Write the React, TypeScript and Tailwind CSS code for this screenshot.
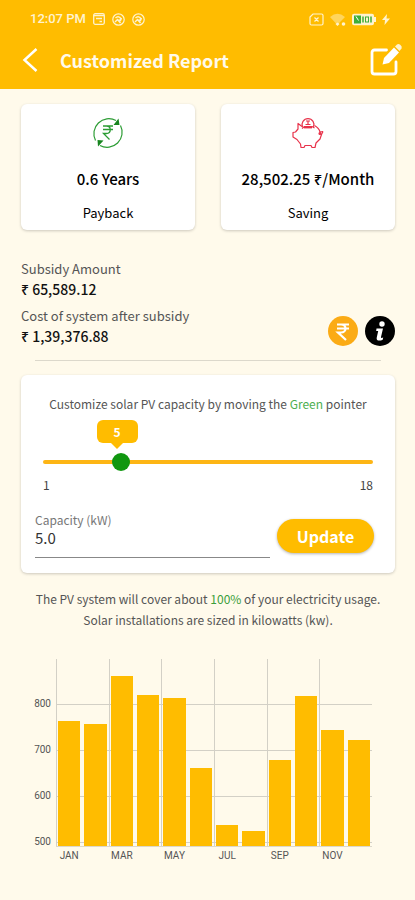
import { useState } from "react";

type MonthOutput = {
  month: string;
  label: boolean;
  kwh: number;
};

const output: MonthOutput[] = [
  { month: "JAN", label: true, kwh: 765 },
  { month: "FEB", label: false, kwh: 759 },
  { month: "MAR", label: true, kwh: 865 },
  { month: "APR", label: false, kwh: 822 },
  { month: "MAY", label: true, kwh: 816 },
  { month: "JUN", label: false, kwh: 663 },
  { month: "JUL", label: true, kwh: 539 },
  { month: "AUG", label: false, kwh: 526 },
  { month: "SEP", label: true, kwh: 681 },
  { month: "OCT", label: false, kwh: 820 },
  { month: "NOV", label: true, kwh: 747 },
  { month: "DEC", label: false, kwh: 725 },
];

const ticks = [800, 700, 600, 500];
const AXIS_MIN = 493;
const AXIS_MAX = 901;

const MIN_KW = 1;
const MAX_KW = 18;

export default function App() {
  const [capacity, setCapacity] = useState(5);
  const [text, setText] = useState("5.0");

  const percent = ((capacity - MIN_KW) / (MAX_KW - MIN_KW)) * 100;

  return (
    <div className="min-h-screen bg-[#fffaeb] pb-9 font-['Noto_Sans_CJK_SC','Noto_Sans',sans-serif] text-[#222]">
      <header className="bg-[#ffbc00] pb-[7px] text-white">
        <StatusBar />
        <div className="flex h-11 items-center pr-3 pl-[22px]">
          <button aria-label="Back" className="mr-[22px]">
            <svg width="16" height="26" viewBox="0 0 16 26" fill="none" stroke="currentColor" strokeWidth="2.5">
              <path d="M14.5 2 2.5 13l12 11" />
            </svg>
          </button>
          <h1 className="flex-1 text-[18px] leading-6 font-bold text-[#fffaeb]">Customized Report</h1>
          <button aria-label="Edit report">
            <EditIcon />
          </button>
        </div>
      </header>

      <main className="pt-[15px] pr-5 pl-[21px]">
        {/* SUMMARY */}
        <div className="grid grid-cols-2 gap-[26px]">
          <SummaryCard icon={<PaybackIcon />} value="0.6 Years" label="Payback" />
          <SummaryCard icon={<PiggyIcon />} value="28,502.25 ₹/Month" label="Saving" />
        </div>

        {/* COST */}
        <section className="mt-[29px] flex items-end justify-between">
          <dl className="text-[13px] leading-5">
            <dt className="text-[#555]">Subsidy Amount</dt>
            <dd className="text-[14px] font-medium text-[#111]">₹ 65,589.12</dd>
            <dt className="mt-[7px] text-[#555]">Cost of system after subsidy</dt>
            <dd className="text-[14px] font-medium text-[#111]">₹ 1,39,376.88</dd>
          </dl>
          <div className="flex gap-[7px]">
            <button aria-label="Price details" className="h-[30px] w-[30px] rounded-full bg-[#fbab15]">
              <svg width="30" height="30" viewBox="0 0 30 30" fill="none" stroke="white" strokeWidth="2.200">
                <path d="M9 8.500h12M9 12.500h12M9 8.500h4c6 0 6 8 0 8H10l8 7.500" />
              </svg>
            </button>
            <button aria-label="Information" className="h-[30px] w-[30px] rounded-full bg-black">
              <svg width="30" height="30" viewBox="0 0 30 30" fill="white">
                <circle cx="17" cy="8" r="2.700" />
                <path d="M11.500 12.500h6.500l-2 8.500c-.2 1 .5 1.200 2.200.5l-.5 2.200c-3 1.500-6.700 1.300-6-2l1.500-6.700h-2z" />
              </svg>
            </button>
          </div>
        </section>
        <hr className="mx-[14px] mt-[14px] border-[#dcd8cb]" />

        {/* CAPACITY */}
        <section className="mt-[14px] rounded-md bg-white px-[14px] pt-[19px] pb-[15px] shadow-[0_1px_3px_rgba(0,0,0,0.2)]">
          <p className="text-center text-[12px] leading-5 text-[#555]">
            Customize solar PV capacity by moving the <span className="text-[#4caf50]">Green</span> pointer
          </p>

          <div className="relative mx-2 mt-[39px] h-[18px]">
            <div className="absolute inset-x-0 top-[7px] h-1 rounded-full bg-[#fdb515]" />
            <input
              type="range"
              aria-label="Solar PV capacity"
              min={MIN_KW}
              max={MAX_KW}
              value={capacity}
              onChange={(e) => {
                setCapacity(Number(e.target.value));
                setText(Number(e.target.value).toFixed(1));
              }}
              className="absolute -left-[9px] h-[18px] w-[calc(100%+18px)] appearance-none bg-transparent [&::-webkit-slider-thumb]:h-[18px] [&::-webkit-slider-thumb]:w-[18px] [&::-webkit-slider-thumb]:appearance-none [&::-webkit-slider-thumb]:rounded-full [&::-webkit-slider-thumb]:bg-[#109710]"
            />
            <div
              className="absolute -top-[33px] -ml-6 flex w-[41px] flex-col items-center"
              style={{ left: `${percent}%` }}
            >
              <output className="w-full rounded-md bg-[#ffbc00] text-center text-[12px] leading-[23px] font-bold text-white">
                {capacity}
              </output>
              <svg width="12" height="6" viewBox="0 0 12 6" fill="#ffbc00">
                <path d="M0 0h12L6 6z" />
              </svg>
            </div>
          </div>

          <div className="mx-2 mt-1 flex justify-between text-[12px] leading-5 text-[#444]">
            <span>{MIN_KW}</span>
            <span>{MAX_KW}</span>
          </div>

          <div className="mt-[17px] flex items-start gap-[7px] pr-[7px]">
            <div className="min-w-0 flex-1 border-b border-[#888] pb-[9px]">
              <label htmlFor="capacity" className="block text-[12px] leading-4 text-[#777]">
                Capacity (kW)
              </label>
              <input
                id="capacity"
                type="text"
                value={text}
                onChange={(e) => setText(e.target.value)}
                className="block h-5 w-full text-[15px] leading-5 text-[#333] outline-none"
              />
            </div>
            <button className="mt-[7px] h-[34px] w-[97px] rounded-full bg-[#ffbc00] text-[16px] font-bold text-white shadow-[0_1px_3px_rgba(0,0,0,0.3)]">
              Update
            </button>
          </div>
        </section>

        <p className="-mx-3 mt-[15px] text-center text-[12px] leading-[21px] text-[#555]">
          The PV system will cover about <span className="text-[#3a9e3a]">100%</span> of your electricity usage.
          <br />
          Solar installations are sized in kilowatts (kw).
        </p>

        <OutputChart />
      </main>
    </div>
  );
}

/* ---------------- COMPONENTS ---------------- */

function StatusBar() {
  return (
    <div className="flex h-[38px] items-center justify-between pr-[25px] pl-[30px] text-[#fff3cf]">
      <div className="flex items-center gap-[7px] font-['Roboto',sans-serif]">
        <span className="text-[13px] leading-5 font-medium">12:07 PM</span>
        <svg width="12" height="12" viewBox="0 0 12 12" fill="none" stroke="currentColor" strokeWidth="1.300">
          <rect x="0.700" y="0.700" width="10.600" height="10.600" rx="1.500" />
          <path d="M1 2.500h10M3 5.500h6M6.500 8.500h2.500" strokeWidth="1.500" />
        </svg>
        <SyncBadge />
        <SyncBadge />
      </div>
      <div className="flex items-center gap-[5px]">
        <svg width="15" height="13" viewBox="0 0 15 13" fill="none" stroke="currentColor" strokeWidth="1.200">
          <path d="M4 1h8.500Q14 1 14 2.500v8Q14 12 12.500 12h-10Q1 12 1 10.500V4zM5.500 4.500l4 4M9.500 4.500l-4 4" />
        </svg>
        <svg width="17" height="13" viewBox="0 0 17 13" fill="currentColor">
          <path d="M1 4Q8.500-2.500 16 4l-5 5-1.500 2H7.500z" opacity="0.450" />
          <path d="M8.500 9.500 6.500 11l2 2 2-2z" />
          <circle cx="14.500" cy="11" r="1.800" />
        </svg>
        <svg width="26" height="13" viewBox="0 0 26 13">
          <path d="M3 0.700h18q2 0 2 2v1.300h2v5h-2v1.300q0 2-2 2H3q-2 0-2-2v-7.600q0-2 2-2z" fill="#fff3cf" />
          <path d="M3 2.500h7v8H3z" fill="#3fae3a" />
          <path d="M12 3.500v6M20 3.500v6" stroke="#3fae3a" strokeWidth="1.500" />
          <rect x="14.500" y="4" width="3" height="5" fill="none" stroke="#3fae3a" />
          <path d="M5 3.500l2.500 4" stroke="#fff" />
        </svg>
        <svg width="8" height="11" viewBox="0 0 8 11" fill="currentColor">
          <path d="M5 0 0 6h3L2.500 11 8 4.500H4.500z" />
        </svg>
      </div>
    </div>
  );
}

function SyncBadge() {
  return (
    <svg width="13" height="13" viewBox="0 0 13 13" fill="none" stroke="currentColor" strokeWidth="1.200">
      <circle cx="6.500" cy="6.500" r="5.700" />
      <path d="M3.500 5Q6 2.500 8.500 5v2.500M6 7l2.500.5L9.500 5M3 9l2.500-2.500L8.500 10" strokeWidth="1.400" />
    </svg>
  );
}

function SummaryCard({ icon, value, label }: { icon: React.ReactNode; value: string; label: string }) {
  return (
    <div className="flex flex-col items-center rounded-md bg-white pt-3 pb-[7px] text-black shadow-[0_1px_3px_rgba(0,0,0,0.2)]">
      {icon}
      <div className="mt-[19px] text-[15px] leading-5 font-medium whitespace-nowrap">{value}</div>
      <div className="mt-[14px] text-[13px] leading-5">{label}</div>
    </div>
  );
}

function EditIcon() {
  return (
    <svg width="34" height="34" viewBox="0 0 34 34" fill="none">
      <path
        d="M17.500 7H5.500Q3 7 3 9.500v19Q3 31 5.500 31h19q2.500 0 2.500-2.500V19"
        stroke="white"
        strokeWidth="2.800"
        strokeLinecap="round"
      />
      <path d="M13.500 21.500l1.500-6.500L25 4.500l5 5L20 20z" fill="white" />
      <path d="M26 3.500 28 1.500q1.500-1 3.500.5t1 3.500L30.500 8z" fill="#fff3cf" />
    </svg>
  );
}

function PaybackIcon() {
  return (
    <svg width="34" height="34" viewBox="0 0 34 34" fill="none" stroke="#2c9c34">
      <path d="M4.500 24.500A15 15 0 0 1 25 4.500M29.500 9.500A15 15 0 0 1 9 29.500" strokeWidth="1.200" />
      <path d="M27.500 2.500l1 6.500h-6zM6.500 24l6 .5-5.500 6z" fill="#17851f" stroke="none" />
      <path d="M12 10h10M12 13.500h10M12 10h3.500c5 0 5 7.500 0 7.500h-3l6 6" strokeWidth="1.300" />
    </svg>
  );
}

function PiggyIcon() {
  return (
    <svg width="34" height="34" viewBox="0 0 34 34" fill="none" stroke="#e8324a" strokeWidth="1.200" strokeLinejoin="round">
      <path d="M11 10.500 7 7.500v5.500L4.500 16 2 16.500v4.500l4 2.500 3.500 4.500 .5 3.500h3l1-2h6l1 2h3l1-4.500 4-4 1.500-4.500 1.500-3" />
      <path d="M32 15.500l-3 .5q-1-4-5.500-6.500M11 12.500l2.500-2h7.500l2.500 1.500" />
      <path d="M11.500 11A6 6 0 1 1 22.500 11" />
      <path d="M15 5h4M17 5v3.500M14.500 8.500h5" />
      <path d="M13 11.500h8" strokeWidth="1.800" />
      <circle cx="29" cy="17.500" r="1" fill="#e8324a" />
    </svg>
  );
}

function OutputChart() {
  return (
    <figure className="mt-[29px] mr-[23px]" aria-label="Monthly output">
      <div className="flex h-[188px]">
        <div className="w-[35px] pt-[22px] pr-[5px] text-right font-['Roboto',sans-serif] text-[10px] text-[#555]">
          {ticks.map((t) => (
            <div key={t} className="h-[46px] leading-[46px]">
              {t}
            </div>
          ))}
        </div>
        <div className="relative flex-1 border-b border-[#dcd8cb]">
          <div className="absolute inset-0">
            {ticks.map((t) => (
              <div key={t} className="h-[46px] border-b border-[#d3d0c6]" />
            ))}
          </div>
          <div className="absolute inset-0 grid grid-cols-6">
            {output
              .filter((m) => m.label)
              .map((m) => (
                <div key={m.month} className="border-l border-[#d3d0c6]" />
              ))}
          </div>
          <div className="relative flex h-full items-end">
            {output.map((m) => (
              <div key={m.month} className="flex h-full flex-1 items-end px-[2px]">
                <div
                  className="w-full bg-[#ffbc00]"
                  style={{ height: `${((m.kwh - AXIS_MIN) / (AXIS_MAX - AXIS_MIN)) * 100}%` }}
                />
              </div>
            ))}
          </div>
        </div>
      </div>
      <div className="grid grid-cols-12 pl-[35px] text-center font-['Roboto',sans-serif] text-[10px] leading-[18px] text-[#555]">
        {output.map((m) => (
          <span key={m.month}>{m.label ? m.month : ""}</span>
        ))}
      </div>
    </figure>
  );
}
